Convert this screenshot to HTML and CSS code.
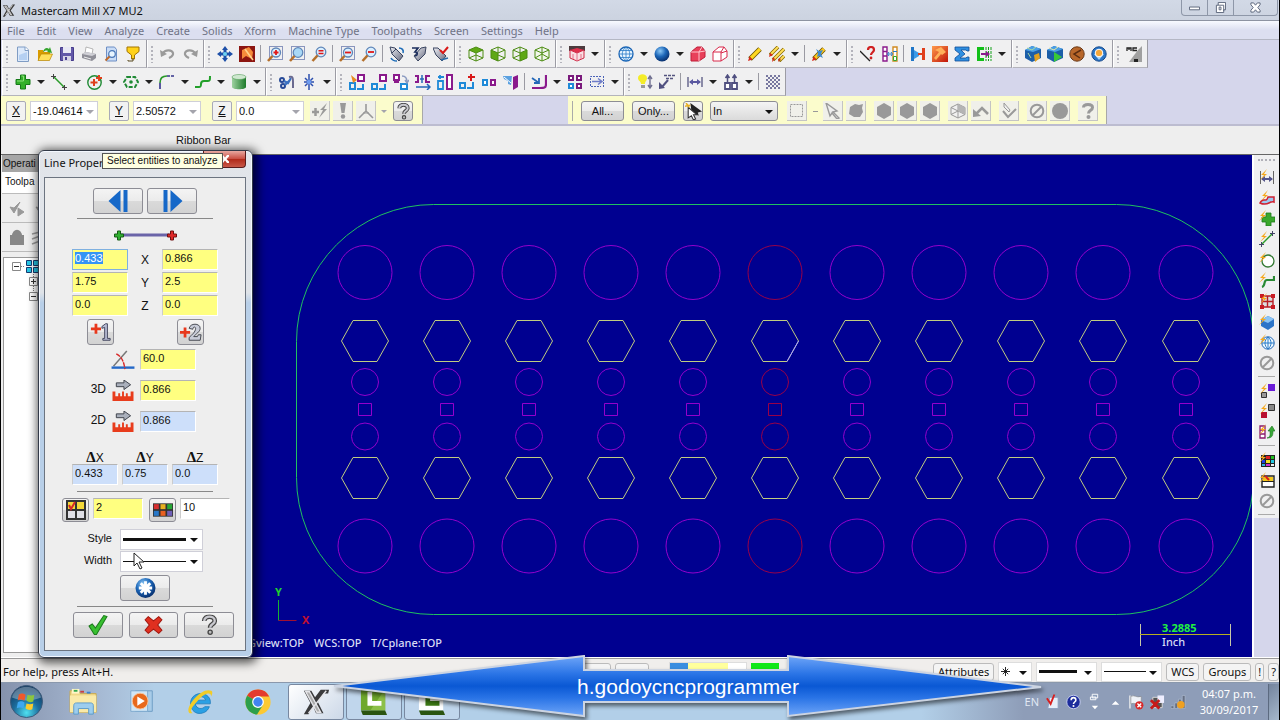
FILE: index.html
```
<!DOCTYPE html>
<html lang="en">
<head>
  <meta charset="UTF-8">
  <meta name="viewport" content="width=device-width, initial-scale=1.0">
  <title>Mastercam Mill X7 MU2</title>
  <link rel="stylesheet" href="styles.css">
</head>
<body>

  <!-- Icon set -->
  <svg class="icon-defs" aria-hidden="true">
    <defs>
      <linearGradient id="g-green" x1="0" y1="0" x2="1" y2="0"><stop offset="0" stop-color="#9ed2a0"/><stop offset="1" stop-color="#1d7a2a"/></linearGradient>
      <linearGradient id="g-red" x1="0" y1="0" x2="1" y2="1"><stop offset="0" stop-color="#ff9a4a"/><stop offset="1" stop-color="#c01408"/></linearGradient>
      <linearGradient id="g-steel" x1="0" y1="0" x2="1" y2="1"><stop offset="0" stop-color="#f2f3f8"/><stop offset="1" stop-color="#63677c"/></linearGradient>
      <linearGradient id="g-banner" x1="0" y1="0" x2="0" y2="1"><stop offset="0" stop-color="#6ea5f8"/><stop offset=".3" stop-color="#2a74e6"/><stop offset=".5" stop-color="#0a58d4"/><stop offset=".7" stop-color="#2a74e6"/><stop offset="1" stop-color="#6ea5f8"/></linearGradient>
      <radialGradient id="g-ball" cx=".38" cy=".3" r=".75"><stop offset="0" stop-color="#8cc8f6"/><stop offset=".5" stop-color="#1c66b8"/><stop offset="1" stop-color="#062a66"/></radialGradient>
      <radialGradient id="g-orb" cx=".5" cy=".85" r=".8"><stop offset="0" stop-color="#4fe0f0"/><stop offset=".5" stop-color="#1c6c9c"/><stop offset="1" stop-color="#123a60"/></radialGradient>
    </defs>

    <symbol id="mark" viewBox="0 0 16 16"><path d="M1 2h5l2 4 4-5h3L10 8l4 6H9L7 10l-4 5H1l4-7z" fill="#3c3c3c"/><path d="M3 3h2l6 10h-1zM12 2L4 13" stroke="#d8d8d8" fill="#999"/></symbol>
    <symbol id="new" viewBox="0 0 16 16"><path d="M2.500 1h8l3 3v11.500h-11z" fill="#dce9fa" stroke="#7f9cc4"/><path d="M10 1v3.500h3.500" fill="#fff" stroke="#7f9cc4"/><path d="M4 9l8-3v8H4z" fill="#b5d0f2"/></symbol>
    <symbol id="open" viewBox="0 0 16 16"><path d="M1 14V4h5l1 2h6v8z" fill="#d99b00"/><path d="M1 14.500L4 8h11.500l-3 6.500z" fill="#ffdf5a" stroke="#b88400" stroke-width=".7"/><path d="M6 6c1-4 4-5 6-3l1-2 2 6-5-1 1-1c-2-1-3 0-5 1z" fill="#35a52e"/></symbol>
    <symbol id="save" viewBox="0 0 16 16"><path d="M1.500 1.500h13v13h-13z" fill="#6258a8" stroke="#463c8c"/><path d="M4 1h8v6H4z" fill="#e8e8f4"/><path d="M4 10h8v5H4z" fill="#d6d4e6"/><path d="M6 11h2v3H6z" fill="#4a4090"/></symbol>
    <symbol id="print" viewBox="0 0 16 16"><path d="M5 1l7 2-1 5H4z" fill="#fff" stroke="#999" stroke-width=".7"/><path d="M1 8l4-2 10 2v4l-4 3-10-3z" fill="#8f8f98"/><path d="M1 8l4-2 10 2-4 2z" fill="#d0d0d6"/><path d="M3 11l7 2" stroke="#eee"/></symbol>
    <symbol id="preview" viewBox="0 0 16 16"><path d="M3.500 1h8l2 2.500V15h-10z" fill="#c9dcf6" stroke="#6d8ec4"/><circle cx="9" cy="8" r="3.300" fill="#e8f5ff" stroke="#4a78b8" stroke-width="1.200"/><path d="M6.500 10.500l-4 4" stroke="#c06a2a" stroke-width="2"/></symbol>
    <symbol id="funnel" viewBox="0 0 16 16"><path d="M2 1h12v4.500L9.500 9v4h-3V9L2 5.500z" fill="#ffd21a" stroke="#a37400"/><path d="M8 12v3H3v-1" stroke="#5a4a20" fill="none"/></symbol>
    <symbol id="undo" viewBox="0 0 16 16"><path d="M3 7c3-4 9-3 10 0 .6 3-2 4-4 5" fill="none" stroke="#9a9a9a" stroke-width="2.200"/><path d="M0 4l1 7 6-3z" fill="#9a9a9a"/></symbol>
    <symbol id="redo" viewBox="0 0 16 16"><path d="M13 7C10 3 4 4 3 7c-.6 3 2 4 4 5" fill="none" stroke="#9a9a9a" stroke-width="2.200"/><path d="M16 4l-1 7-6-3z" fill="#9a9a9a"/></symbol>
    <symbol id="pan" viewBox="0 0 16 16"><path d="M8 0l3 4H9.500v2.500H12V5l4 3-4 3V9.500H9.500V12H11l-3 4-3-4h1.500V9.500H4V11L0 8l4-3v1.500h2.500V4H5z" fill="#1d4fa8"/><circle cx="8" cy="8" r="2" fill="#6cd0f0"/></symbol>
    <symbol id="repaint" viewBox="0 0 16 16"><path d="M0 0h16v16H0z" fill="#8c1510"/><path d="M3 4l7-3 4 5-1 7-6-3-4 3z" fill="#f58b3a"/><path d="M6 3l5 7 3 4" stroke="#ffd28a" stroke-width="1.600"/></symbol>
    <symbol id="zoomwin" viewBox="0 0 16 16"><path d="M2.500.5h13v13h-13z" fill="none" stroke="#223a88" stroke-dasharray="1 1"/><circle cx="9" cy="6.500" r="4.500" fill="#d9efff" stroke="#5f86b8" stroke-width="1.300"/><path d="M5.500 10L1 15" stroke="#b5702c" stroke-width="2.600"/><path d="M9 4v5M6.500 6.500h5" stroke="#e01818" stroke-width="1.800"/></symbol>
    <symbol id="zoomfit" viewBox="0 0 16 16"><path d="M2.500.5h13v13h-13z" fill="none" stroke="#223a88" stroke-dasharray="1 1"/><circle cx="9" cy="6.500" r="4.800" fill="#a9d8f6" stroke="#5f86b8" stroke-width="1.300"/><path d="M5.500 10L1 15" stroke="#b5702c" stroke-width="2.600"/></symbol>
    <symbol id="zoomeq" viewBox="0 0 16 16"><circle cx="10" cy="6" r="4.800" fill="#d9efff" stroke="#5f86b8" stroke-width="1.300"/><path d="M6.500 9.500L1.500 15" stroke="#b5702c" stroke-width="2.600"/><path d="M7.500 4.800h5M7.500 7.500h5" stroke="#e01818" stroke-width="1.500"/></symbol>
    <symbol id="zoomoutwin" viewBox="0 0 16 16"><path d="M2.500.5h13v13h-13z" fill="none" stroke="#223a88" stroke-dasharray="1 1"/><circle cx="9" cy="6.500" r="4.500" fill="#d9efff" stroke="#5f86b8" stroke-width="1.300"/><path d="M5.500 10L1 15" stroke="#b5702c" stroke-width="2.600"/><path d="M6 6.500h6" stroke="#e01818" stroke-width="1.800"/></symbol>
    <symbol id="zoomout" viewBox="0 0 16 16"><circle cx="10" cy="6" r="4.800" fill="#d9efff" stroke="#5f86b8" stroke-width="1.300"/><path d="M6.500 9.500L1.500 15" stroke="#b5702c" stroke-width="2.600"/><path d="M7 6h6" stroke="#e01818" stroke-width="1.800"/></symbol>
    <symbol id="spin" viewBox="0 0 16 16"><path d="M1 1l5 1 8 8-4 5-7-7z" fill="url(#g-steel)" stroke="#3a4560"/><path d="M3 7l4-4" stroke="#3a4560"/><path d="M10 2c3 0 5 2 4 5M2 12c1 2 4 3 6 3" fill="none" stroke="#1f6db8" stroke-width="1.600"/></symbol>
    <symbol id="spin2" viewBox="0 0 16 16"><path d="M15 1l-5 1-7 8 4 5 7-7z" fill="url(#g-steel)" stroke="#3a4560"/><path d="M1 2h6L4 6c3 0 3 3 0 4" fill="none" stroke="#1b2d5c" stroke-width="1.700"/></symbol>
    <symbol id="spinok" viewBox="0 0 16 16"><path d="M0 2l5 0 8 8-4 5-6-6z" fill="url(#g-steel)" stroke="#3a4560"/><path d="M7 4l3 3 5-6" fill="none" stroke="#d81818" stroke-width="2"/><path d="M8 14l7-2" stroke="#2a6aa8" stroke-width="1.500"/></symbol>
    <symbol id="cubetop" viewBox="0 0 16 16"><path d="M1 4l7-3 7 3-7 3z" fill="#5fa816"/><path d="M1 4l7-3 7 3v8l-7 3-7-3zM1 4l7 3 7-3M8 7v8M1 12l7-3 7 3" fill="none" stroke="#4c8c12"/></symbol>
    <symbol id="cubefront" viewBox="0 0 16 16"><path d="M1 4l7 3v8l-7-3z" fill="#5fa816"/><path d="M1 4l7-3 7 3v8l-7 3-7-3zM1 4l7 3 7-3M8 1v14M8 9l7 3" fill="none" stroke="#4c8c12"/></symbol>
    <symbol id="cuberight" viewBox="0 0 16 16"><path d="M15 4L8 7v8l7-3z" fill="#5fa816"/><path d="M1 4l7-3 7 3v8l-7 3-7-3zM1 4l7 3 7-3M8 1v14M8 9l-7 3" fill="none" stroke="#4c8c12"/></symbol>
    <symbol id="cubeiso" viewBox="0 0 16 16"><path d="M1 4l7-3 7 3v8l-7 3-7-3zM1 4l7 3 7-3M8 1v14M1 12l7-4 7 4" fill="#f2f7ea" stroke="#4c8c12"/></symbol>
    <symbol id="cubered" viewBox="0 0 16 16"><path d="M0 0h16v5H0z" fill="#4b3b3e"/><path d="M1 4l7-2 7 2-7 3z" fill="#e0304c"/><path d="M1 4l7 3 7-3v8l-7 3-7-3z" fill="#f9dfe3" stroke="#cf2844"/><path d="M8 7v8M4 8v5M12 8v5" stroke="#e4708a"/></symbol>
    <symbol id="globe" viewBox="0 0 16 16"><circle cx="8" cy="8" r="7" fill="#eaf6ff" stroke="#1a63b4" stroke-width="1.300"/><path d="M1 8h14M8 1v14M2.500 4.500h11M2.500 11.500h11M8 1C3 5 3 11 8 15M8 1c5 4 5 10 0 14" fill="none" stroke="#2a7cc8" stroke-width=".8"/></symbol>
    <symbol id="ball" viewBox="0 0 16 16"><circle cx="8" cy="8" r="7.500" fill="url(#g-ball)"/></symbol>
    <symbol id="solidred" viewBox="0 0 16 16"><path d="M1 6l6-5h5l3 4v6l-6 4H1z" fill="#e8405a" stroke="#c01c38"/><path d="M1 6h8v9M9 6l3-5M9 6l6-1" fill="none" stroke="#ffc4cc"/></symbol>
    <symbol id="solidwire" viewBox="0 0 16 16"><path d="M1 6l6-5h5l3 4v6l-6 4H1zM1 6h8v9M9 6l3-5M9 7l6-2" fill="#fff" stroke="#d8284a"/></symbol>
    <symbol id="pencil" viewBox="0 0 16 16"><path d="M3 13L13 3" stroke="#6b5200" stroke-width="5"/><path d="M4 12l9-9" stroke="#ffd820" stroke-width="3.200"/><path d="M1 15l1.500-4.500 3 3z" fill="#d82a1a"/></symbol>
    <symbol id="pencils" viewBox="0 0 16 16"><path d="M1 9l8-8M4 14L15 3M10 15l5-5" stroke="#8a6a00" stroke-width="3.600"/><path d="M2 8l7-7M5 13L15 3M11 14l4-4" stroke="#ffdf58" stroke-width="2"/><path d="M0 11l4-2-3-2zM3 16l3-3-2-2zM9 16l3-3-2-1z" fill="#d82a1a"/></symbol>
    <symbol id="pencilblue" viewBox="0 0 16 16"><path d="M3 13L13 3" stroke="#6b5200" stroke-width="5"/><path d="M4 12l9-9" stroke="#ffc81a" stroke-width="3.200"/><path d="M1 15l1.500-4.500 3 3z" fill="#d82a1a"/><path d="M5 3l3 2 4-1-2 4 2 4-4-2-2 1 1-4z" fill="#3d8ad0"/></symbol>
    <symbol id="what" viewBox="0 0 16 16"><path d="M0 5l10 10" stroke="#222" stroke-width="1.300"/><path d="M8 4c0-4 6-4 6 0 0 2-3 2.500-3 5" fill="none" stroke="#d02020" stroke-width="2.200"/><circle cx="11" cy="12" r="1.400" fill="#d02020"/></symbol>
    <symbol id="compare" viewBox="0 0 16 16"><path d="M1 1h4v14H1zM1 5.500h4M1 10h4" fill="#fff" stroke="#8a1a8c" stroke-width="1.400"/><path d="M11 1h4v14h-4z" fill="#fff" stroke="#d08a20" stroke-width="1.400"/><path d="M11.500 10.500h3v4h-3z" fill="#fff" stroke="#35a52e"/><path d="M11 5.500h4" stroke="#2a7cc8"/><path d="M6 8h4M7 6L5.500 8 7 10M9 6l1.500 2L9 10" stroke="#2a7cc8" fill="none"/></symbol>
    <symbol id="dynamic" viewBox="0 0 16 16"><path d="M1 1h3v14H1z" fill="#1f76c8"/><path d="M4 4l5 3v3l-5 3z" fill="#3a9ae8"/><path d="M8 7h4V2h3v12h-3V9H8z" fill="#e0401c"/></symbol>
    <symbol id="hammer" viewBox="0 0 16 16"><path d="M0 0h16v16H0z" fill="url(#g-red)"/><path d="M3 4l6-3 5 5-4 3-1-1-5 6-2-2 5-6z" fill="#ffb05a"/></symbol>
    <symbol id="sigma" viewBox="0 0 16 16"><path d="M1 1h14v4h-2l-1-1H7l4 4-5 4h6l1-1h2v4H1v-3l5-4-5-4z" fill="#2f8fe0" stroke="#104c98" stroke-width=".8"/></symbol>
    <symbol id="contour" viewBox="0 0 16 16"><path d="M8 1H1v14h7v-3H4V4h4z" fill="#12c018"/><path d="M10 1v14M12.500 1v14M15 1v14" stroke="#12a018" stroke-dasharray="3 1"/><path d="M5 7h5V5l4 3-4 3V9H5z" fill="#8a1a8c"/></symbol>
    <symbol id="verify" viewBox="0 0 16 16"><path d="M0 4l7-4 9 3v9l-9 4-7-4z" fill="#1b5ea8"/><path d="M0 4l7-4 9 3-8 3z" fill="#4aa0e8"/><path d="M2 2l5 2 4-3M3 7l3 5" stroke="#a8d8a0" fill="none"/><path d="M9 9l5-2 1 5-5 4z" fill="#e0a020"/></symbol>
    <symbol id="backplot" viewBox="0 0 16 16"><path d="M0 4l7-4 9 3v9l-9 4-7-4z" fill="#1b5ea8"/><path d="M0 4l7-4 9 3-8 3z" fill="#4aa0e8"/><path d="M2 2l5 2 4-3" stroke="#e8e8a0" fill="none"/><path d="M7 6l8 5-8 5z" fill="#38c838"/></symbol>
    <symbol id="coin" viewBox="0 0 16 16"><circle cx="8" cy="8" r="7.200" fill="#b8672a" stroke="#6a3a18"/><path d="M12 4L5 8l6 4" fill="none" stroke="#5c2d10" stroke-width="1.500"/></symbol>
    <symbol id="coinblue" viewBox="0 0 16 16"><circle cx="8" cy="8" r="7.200" fill="#2a76c8" stroke="#164a8c"/><path d="M3 8l5 6 5-6z" fill="#a8d4f8"/><circle cx="8" cy="7" r="3.800" fill="#f6a83a" stroke="#fff"/></symbol>
    <symbol id="mc" viewBox="0 0 16 16"><path d="M16 0v16H3L12 4z" fill="#a0a0a0"/><path d="M1 5V2h4v3M3 2v2M11 2H7v2.500h4" fill="none" stroke="#222" stroke-width="1.300"/><path d="M8 13h4v3H8z" fill="#222"/></symbol>

    <symbol id="plus" viewBox="0 0 16 16"><path d="M5.500 1h5v4.500H15v5h-4.500V15h-5v-4.500H1v-5h4.500z" fill="#34b02a" stroke="#157a18"/><path d="M6.500 2h2v5H2" fill="none" stroke="#8ae07a"/></symbol>
    <symbol id="line" viewBox="0 0 16 16"><path d="M3 3l10 10" stroke="#2a9a2a" stroke-width="1.500"/><path d="M0 2.500h5M2.500 0v5M11 13.500h5M13.500 11v5" stroke="#444"/></symbol>
    <symbol id="arc" viewBox="0 0 16 16"><circle cx="7.500" cy="8.500" r="6.700" fill="none" stroke="#1f8a34" stroke-width="1.400"/><path d="M7 5v7M3.500 8.500h7M12 1v6M9 4h6" stroke="#e0401c" stroke-width="2"/></symbol>
    <symbol id="slot" viewBox="0 0 16 16"><path d="M4 3h8l3 5-3 5H4L1 8z" fill="none" stroke="#1f8a34" stroke-width="2" stroke-dasharray="4 1.500"/><circle cx="8" cy="8" r="1.800" fill="#1f8a34"/></symbol>
    <symbol id="fillet" viewBox="0 0 16 16"><path d="M1 15V9" stroke="#34348c" stroke-width="1.600"/><path d="M1 9c0-5 2-7 7-7" fill="none" stroke="#2a9a2a" stroke-width="1.600"/><path d="M8 2h8" stroke="#34348c" stroke-width="1.600" stroke-dasharray="3 1"/></symbol>
    <symbol id="spline" viewBox="0 0 16 16"><path d="M0 13h4c2 0 2-1 2-3s1-3 3-3h4c2 0 2-1 2-5" fill="none" stroke="#22a02a" stroke-width="2"/></symbol>
    <symbol id="cylinder" viewBox="0 0 16 16"><path d="M1 3v10c0 3 14 3 14 0V3z" fill="url(#g-green)"/><ellipse cx="8" cy="3" rx="7" ry="2.500" fill="#cfe8d0" stroke="#5aa060" stroke-width=".6"/></symbol>
    <symbol id="wrench" viewBox="0 0 16 16"><circle cx="3" cy="6" r="2" fill="none" stroke="#274a98" stroke-width="2"/><circle cx="4" cy="12" r="2" fill="none" stroke="#274a98" stroke-width="2"/><path d="M5 7l4 2 3-5M6 11l5-5" fill="none" stroke="#3a70c0" stroke-width="2.200"/><path d="M10 3c4-1 4 1 4 5v6" fill="none" stroke="#6a6a90" stroke-width="2"/></symbol>
    <symbol id="star" viewBox="0 0 16 16"><path d="M8 0v16M4 4l8 8M12 4l-8 8M3 8h10" stroke="#2c4fae" stroke-width="1.500"/><circle cx="8" cy="8" r="2.200" fill="#6d9cf0"/></symbol>
    <symbol id="x1" viewBox="0 0 16 16"><path d="M9 1h6v6H9z" fill="#fff" stroke="#8a1a8c" stroke-width="2"/><path d="M1 9h5v6H1zM8 15h6v-5" fill="none" stroke="#1f8ad8" stroke-width="2"/><path d="M2 1l6 5-4 3z" fill="#e88a20"/></symbol>
    <symbol id="x2" viewBox="0 0 16 16"><path d="M9 1h6v6H9z" fill="#fff" stroke="#8a1a8c" stroke-width="2"/><path d="M1 10h5v5H1zM8 15h6v-5" fill="none" stroke="#1f8ad8" stroke-width="2"/></symbol>
    <symbol id="x3" viewBox="0 0 16 16"><path d="M1 1h5v5H1zM1 8h5" fill="#fff" stroke="#8a1a8c" stroke-width="2"/><path d="M8 10h6v5H8z" fill="#fff" stroke="#1f8ad8" stroke-width="2"/><path d="M9 2c4 0 5 2 5 6M12 6l2 3 2-3" fill="none" stroke="#8a9ac0" stroke-width="1.400"/></symbol>
    <symbol id="x4" viewBox="0 0 16 16"><path d="M15 2h-4v6h4M0 2h3v6H0" fill="none" stroke="#8a1a8c" stroke-width="2"/><path d="M7 1v8M1 13h14M12 10l3 3-3 3M5 5h4" fill="none" stroke="#2468b8" stroke-width="1.500"/></symbol>
    <symbol id="x5" viewBox="0 0 16 16"><path d="M10 1h5v14h-5z" fill="#fff" stroke="#8a1a8c" stroke-width="2"/><path d="M1 7h5v8H1zM1 3h6M3 1v4" fill="none" stroke="#1f8ad8" stroke-width="1.800"/></symbol>
    <symbol id="x6" viewBox="0 0 16 16"><path d="M1 9h5v5H1zM8 14h6V8" fill="none" stroke="#1f8ad8" stroke-width="2"/><path d="M12 0v7M9 3h7" stroke="#d81818" stroke-width="2"/></symbol>
    <symbol id="x7" viewBox="0 0 16 16"><path d="M2 6h4v5H2z" fill="#fff" stroke="#1f8ad8" stroke-width="2"/><path d="M10 6h4v5h-4z" fill="#fff" stroke="#8a1a8c" stroke-width="2"/></symbol>
    <symbol id="x8" viewBox="0 0 16 16"><path d="M10 3l5-2v12l-5 3z" fill="#8a1a8c"/><path d="M0 2h9l-1 9-3-1V7L1 5z" fill="#5aa0e0"/><path d="M1 3l7 6" stroke="#fff"/></symbol>
    <symbol id="x9" viewBox="0 0 16 16"><path d="M1 4l7 5M8 4v5H3" fill="none" stroke="#2468b8" stroke-width="1.800"/><path d="M15 1v9c0 4-2 4-6 4H1" fill="none" stroke="#8a1a8c" stroke-width="2.200"/></symbol>
    <symbol id="x10" viewBox="0 0 16 16"><path d="M2 2h4v4H2zM10 2h4v4h-4zM10 10h4v4h-4z" fill="#fff" stroke="#7a1a7c" stroke-width="2"/><path d="M2 10h4v4H2z" fill="#fff" stroke="#1f8ad8" stroke-width="2"/></symbol>
    <symbol id="x11" viewBox="0 0 16 16"><path d="M12 2.500H1.500v10H12M14.500 2v11" fill="none" stroke="#4a62b8" stroke-dasharray="2 1"/><path d="M3 7.500h9M9 4.500l4 3-4 3" fill="none" stroke="#6e7cc8" stroke-width="1.500"/></symbol>
    <symbol id="bulb" viewBox="0 0 16 16"><path d="M1 4c0-5 9-5 9 0 0 3-2 3-2 6H4c0-3-3-3-3-6z" fill="#f4ec28"/><path d="M4 11h4v3H4z" fill="#999"/><path d="M13 2v12M11 5l2-3 2 3M11 11l2 3 2-3" fill="none" stroke="#707090" stroke-width="1.400"/></symbol>
    <symbol id="note" viewBox="0 0 16 16"><path d="M5 1.500h11M7 4.500h8" stroke="#555580" stroke-dasharray="3 1" stroke-width="1.300"/><path d="M9 6l-6 7" stroke="#505080" stroke-width="2"/><path d="M0 15V8l6 6z" fill="#505080"/></symbol>
    <symbol id="dim" viewBox="0 0 16 16"><path d="M1 3v10M15 3v10" stroke="#555580" stroke-width="1.300"/><path d="M3 8h10" stroke="#5a58a0" stroke-width="2"/><path d="M2 8l4-3v6zM14 8l-4-3v6z" fill="#5a58a0"/></symbol>
    <symbol id="dims" viewBox="0 0 16 16"><path d="M2 9h5v6H2zM9 9h5v6H9z" fill="#fff" stroke="#505080" stroke-width="1.800"/><path d="M4.500 8V2M11.500 8V2M2.500 4l2-3 2 3M9.500 4l2-3 2 3" fill="none" stroke="#505080" stroke-width="1.500"/></symbol>
    <symbol id="hatch" viewBox="0 0 16 16"><path d="M1 2h14M1 6h14M1 10h14M1 14h14" stroke="#7878a0" stroke-width="2" stroke-dasharray="2 2"/><path d="M3 4h12M3 8h12M3 12h12" stroke="#7878a0" stroke-width="2" stroke-dasharray="2 2"/></symbol>

    <symbol id="flash" viewBox="0 0 16 16"><path d="M0 9h7M3.500 5v8" stroke="#999" stroke-width="2.500"/><path d="M15 0L8 7h3l-4 8 8-9h-3z" fill="#999"/></symbol>
    <symbol id="bang" viewBox="0 0 16 16"><path d="M5 0h6L9.500 10h-3z" fill="#999"/><circle cx="8" cy="13.500" r="2.200" fill="#999"/></symbol>
    <symbol id="axis" viewBox="0 0 16 16"><path d="M8 1v7L1 15M8 8l7 7" fill="none" stroke="#999" stroke-width="1.600"/><path d="M5 10l6 0" stroke="#999"/></symbol>
    <symbol id="help" viewBox="0 0 16 16"><path d="M4 5c0-4.500 8-4.500 8 0C12 7.500 8.500 7 8.500 10" fill="none" stroke="#444" stroke-width="3.600"/><path d="M4 5c0-4.500 8-4.500 8 0C12 7.500 8.500 7 8.500 10" fill="none" stroke="#c9c9cf" stroke-width="1.800"/><circle cx="8.500" cy="13.500" r="1.600" fill="#bbb" stroke="#444"/></symbol>
    <symbol id="helpoff" viewBox="0 0 16 16"><path d="M3.500 4.500c0-4 9-4 9 0C12.500 7.500 8.500 7 8.500 10.500" fill="none" stroke="#999" stroke-width="3"/><circle cx="8.500" cy="14" r="2" fill="#999"/></symbol>
    <symbol id="pick" viewBox="0 0 16 16"><path d="M5 0l11 8-4 1 1 3-3-2-4-3z" fill="#222"/><path d="M3 4v10l3-2 2 4 2-1-2-4h3z" fill="#fff" stroke="#333"/><path d="M0 3l5-1M1 0l3 4" stroke="#e8b020" stroke-width="1.400"/></symbol>
    <symbol id="marquee" viewBox="0 0 16 16"><path d="M1.500 1.500h12v12h-12z" fill="none" stroke="#999" stroke-dasharray="2 1"/></symbol>
    <symbol id="arrow" viewBox="0 0 16 16"><path d="M1 0l11 8-4 1 6 6-2 1-5-6-2 3z" fill="#eee" stroke="#999" stroke-width="1.400"/></symbol>
    <symbol id="blob" viewBox="0 0 16 16"><path d="M2 4l5-3 4 1 4-1-1 4 1 4-3 5H6l-5-3z" fill="#999"/></symbol>
    <symbol id="hexa" viewBox="0 0 16 16"><path d="M8 0l7 4v8l-7 4-7-4V4z" fill="#999"/></symbol>
    <symbol id="pie" viewBox="0 0 16 16"><path d="M8 1l7 3.500v7L8 15l-7-3.500v-7z" fill="#f0f0f0" stroke="#999"/><path d="M8 1v14M1 4.500l7 3.500 7-3.500M1 11.500L8 8l7 3.500" fill="none" stroke="#999"/><path d="M8 1l7 3.500v7L8 8z" fill="#b4b4b4"/></symbol>
    <symbol id="bend" viewBox="0 0 16 16"><path d="M3 11l6-6 6 6" fill="none" stroke="#999" stroke-width="2.600"/><path d="M0 6v8l8-1z" fill="#999"/></symbol>
    <symbol id="checkpen" viewBox="0 0 16 16"><path d="M2 8l5 6 8-8" fill="none" stroke="#999" stroke-width="2"/><path d="M3 0l6 7-1 2L3 4z" fill="#eee" stroke="#999"/></symbol>
    <symbol id="none" viewBox="0 0 16 16"><circle cx="8" cy="8" r="6.300" fill="none" stroke="#999" stroke-width="2"/><path d="M12.500 3.500l-9 9" stroke="#999" stroke-width="2"/></symbol>
    <symbol id="disc" viewBox="0 0 16 16"><circle cx="8" cy="8" r="8" fill="#999"/></symbol>

    <symbol id="q1" viewBox="0 0 16 16"><path d="M1.500 2v13M14.500 2v13" stroke="#666"/><path d="M3 10h10" stroke="#55558c" stroke-width="2"/><path d="M2 10l4-3v6zM14 10l-4-3v6z" fill="#55558c"/><path d="M8 0L2 6h3L1 11l7-6H5z" fill="#f5a81c"/></symbol>
    <symbol id="q2" viewBox="0 0 16 16"><path d="M1 13c3-7 6 1 8-6l6 0v5c-4-2-6 5-14 1z" fill="#9cc8f0" stroke="#d02030" stroke-width="1.500"/><path d="M9 0L3 6h3L2 11l7-6H6z" fill="#f5a81c"/></symbol>
    <symbol id="q3" viewBox="0 0 16 16"><path d="M7 3h5v4h4v5h-4v4H7v-4H3V7h4z" fill="#3aa82c" stroke="#1c7a1c" stroke-width=".8"/><path d="M7 0L1 6h3L0 11l7-6H4z" fill="#f5a81c"/></symbol>
    <symbol id="q4" viewBox="0 0 16 16"><path d="M3 13L13 3" stroke="#2a9a2a" stroke-width="1.500"/><path d="M0 13.500h5M2.500 11v5M11 2.500h5M13.500 0v5" stroke="#446"/><path d="M8 0L2 6h3L1 11l7-6H5z" fill="#f5a81c"/></symbol>
    <symbol id="q5" viewBox="0 0 16 16"><circle cx="9" cy="9" r="6" fill="#fff" stroke="#347a34" stroke-width="1.300"/><path d="M7 0L1 6h3L0 11l7-6H4z" fill="#f5a81c"/></symbol>
    <symbol id="q6" viewBox="0 0 16 16"><path d="M3 15c4-1 1-7 5-7h7V4" fill="none" stroke="#2a8a34" stroke-width="2.200"/><path d="M7 0L1 6h3L0 11l7-6H4z" fill="#f5a81c"/></symbol>
    <symbol id="q7" viewBox="0 0 16 16"><path d="M3 3h11v11H3zM3 8.500h11M8.500 3v11" fill="#ddd" stroke="#b81c24" stroke-width="1.400"/><path d="M1 1h4v4H1zM12 1h4v4h-4zM1 12h4v4H1zM12 12h4v4h-4z" fill="#c81c24"/><path d="M8 0L2 6h3L1 11l7-6H5z" fill="#f5a81c"/></symbol>
    <symbol id="q8" viewBox="0 0 16 16"><path d="M2 6l7-4 6 3v7l-6 4-7-4z" fill="#2c74c8"/><path d="M2 6l7-4 6 3-6 4z" fill="#8cc4f4"/><path d="M7 0L1 6h3L0 11l7-6H4z" fill="#f5a81c"/></symbol>
    <symbol id="q9" viewBox="0 0 16 16"><circle cx="9" cy="9" r="6.200" fill="#eef8ff" stroke="#1a63b4"/><path d="M3 9h12M9 3v12M9 3C5 6 5 12 9 15M9 3c4 3 4 9 0 12" fill="none" stroke="#2a7cc8"/><path d="M7 0L1 6h3L0 11l7-6H4z" fill="#f5a81c"/></symbol>
    <symbol id="q10" viewBox="0 0 16 16"><path d="M9 1h7v7H9z" fill="#6a1cd8"/><path d="M2.500 9.500h5v5h-5z" fill="#999" stroke="#333"/><path d="M8 0L2 6h3L1 11l7-6H5z" fill="#f5a81c"/></symbol>
    <symbol id="q11" viewBox="0 0 16 16"><path d="M9.500 1.500h6v6h-6z" fill="#888" stroke="#333"/><path d="M2 9h6v6H2z" fill="#b81030"/><path d="M8 0L2 6h3L1 11l7-6H5z" fill="#f5a81c"/></symbol>
    <symbol id="q12" viewBox="0 0 16 16"><path d="M1 2h5v12H1zM1 6h5M1 10h5" fill="#fff" stroke="#8a1a6c" stroke-width="1.300"/><path d="M8 14c4-1 3-4 3-7H9l4-5 3 5h-2c0 5-1 7-6 7z" fill="#38a838" stroke="#1a701c" stroke-width=".6"/><path d="M7 0L1 6h3L0 11l7-6H4z" fill="#f5a81c"/></symbol>
    <symbol id="q13" viewBox="0 0 16 16"><path d="M2 3h14v12H2z" fill="#222"/><path d="M7 4h4v3H7z" fill="#e02020"/><path d="M12 4h3v3h-3z" fill="#22c022"/><path d="M3 8h3v3H3z" fill="#2040e0"/><path d="M7 8h4v3H7z" fill="#f0e020"/><path d="M12 8h3v3h-3z" fill="#20c8e0"/><path d="M3 12h3v2H3z" fill="#30b0e0"/><path d="M7 12h4v2H7z" fill="#d030d0"/><path d="M12 12h3v2h-3z" fill="#eee"/><path d="M7 0L1 6h3L0 11l7-6H4z" fill="#f5a81c"/></symbol>
    <symbol id="q14" viewBox="0 0 16 16"><path d="M3 4h12v11H3z" fill="#fff" stroke="#222" stroke-width="1.400"/><path d="M4 5h10v4H4z" fill="#f2c81c"/><path d="M3 9.500h12" stroke="#222"/><path d="M6 4l4 4" stroke="#d81c1c" stroke-width="2"/><path d="M7 0L1 6h3L0 11l7-6H4z" fill="#f5a81c"/></symbol>
  </svg>

  <div class="app">

    <header class="titlebar">
      <svg class="titlebar-mark"><use href="#mark"/></svg>
      <span class="titlebar-text">Mastercam Mill X7 MU2</span>
      <div class="window-buttons">
        <button aria-label="Minimize"><svg viewBox="0 0 12 12"><path d="M.5 5.500h11v3H.5z" fill="#fff" stroke="#566076"/></svg></button>
        <button aria-label="Restore"><svg viewBox="0 0 12 12"><path d="M3.500.5h8v8h-2v3h-8v-8h2z" fill="#fff" stroke="#566076"/><path d="M4.500 5.500h2v3h-2zM3.500 3.500h6v6" fill="none" stroke="#566076"/></svg></button>
        <button class="wide" aria-label="Close"><svg viewBox="0 0 12 12"><path d="M1 1h3l2 2.500L8 1h3v2L8.500 6 11 9v2H8L6 8.500 4 11H1V9l2.500-3L1 3z" fill="#fff" stroke="#566076"/></svg></button>
      </div>
    </header>

    <nav class="menubar">
      <a href="#">File</a>
      <a href="#">Edit</a>
      <a href="#">View</a>
      <a href="#">Analyze</a>
      <a href="#">Create</a>
      <a href="#">Solids</a>
      <a href="#">Xform</a>
      <a href="#">Machine Type</a>
      <a href="#">Toolpaths</a>
      <a href="#">Screen</a>
      <a href="#">Settings</a>
      <a href="#">Help</a>
    </nav>

    <div class="toolbar toolbar-main">
      <div class="group">
        <button class="tool" aria-label="New"><svg><use href="#new"/></svg></button>
        <button class="tool" aria-label="Open"><svg><use href="#open"/></svg></button>
        <button class="tool" aria-label="Save"><svg><use href="#save"/></svg></button>
        <button class="tool" aria-label="Print"><svg><use href="#print"/></svg></button>
        <button class="tool" aria-label="Print preview"><svg><use href="#preview"/></svg></button>
        <button class="tool" aria-label="Filter"><svg><use href="#funnel"/></svg></button>
      </div>
      <div class="group">
        <button class="tool" aria-label="Undo"><svg><use href="#undo"/></svg></button>
        <button class="tool" aria-label="Redo"><svg><use href="#redo"/></svg></button>
      </div>
      <div class="group">
        <button class="tool" aria-label="Pan"><svg><use href="#pan"/></svg></button>
        <button class="tool" aria-label="Repaint"><svg><use href="#repaint"/></svg></button>
        <span class="sep"></span>
        <button class="tool" aria-label="Zoom window"><svg><use href="#zoomwin"/></svg></button>
        <button class="tool" aria-label="Zoom target"><svg><use href="#zoomfit"/></svg></button>
        <button class="tool" aria-label="Fit"><svg><use href="#zoomeq"/></svg></button>
        <span class="sep"></span>
        <button class="tool" aria-label="Unzoom window"><svg><use href="#zoomoutwin"/></svg></button>
        <button class="tool" aria-label="Unzoom"><svg><use href="#zoomout"/></svg></button>
        <span class="sep"></span>
        <button class="tool" aria-label="Dynamic rotation"><svg><use href="#spin"/></svg></button>
        <button class="tool" aria-label="Previous view"><svg><use href="#spin2"/></svg></button>
        <button class="tool" aria-label="Named views"><svg><use href="#spinok"/></svg></button>
      </div>
      <div class="group">
        <button class="tool" aria-label="Top view"><svg><use href="#cubetop"/></svg></button>
        <button class="tool" aria-label="Front view"><svg><use href="#cubefront"/></svg></button>
        <button class="tool" aria-label="Right view"><svg><use href="#cuberight"/></svg></button>
        <button class="tool" aria-label="Isometric view"><svg><use href="#cubeiso"/></svg></button>
      </div>
      <div class="group">
        <button class="tool" aria-label="Planes"><svg><use href="#cubered"/></svg></button>
        <button class="drop" aria-label="More planes"></button>
      </div>
      <div class="group">
        <button class="tool" aria-label="Wireframe"><svg><use href="#globe"/></svg></button>
        <button class="drop" aria-label="Wireframe options"></button>
        <button class="tool" aria-label="Shaded"><svg><use href="#ball"/></svg></button>
        <button class="drop" aria-label="Shading options"></button>
        <button class="tool" aria-label="Solid shading"><svg><use href="#solidred"/></svg></button>
        <button class="tool" aria-label="Solid outline"><svg><use href="#solidwire"/></svg></button>
      </div>
      <div class="group">
        <button class="tool" aria-label="Delete"><svg><use href="#pencil"/></svg></button>
        <button class="tool" aria-label="Delete duplicates"><svg><use href="#pencils"/></svg></button>
        <button class="drop" aria-label="Delete options"></button>
        <span class="sep"></span>
        <button class="tool" aria-label="Undelete"><svg><use href="#pencilblue"/></svg></button>
        <button class="drop" aria-label="Undelete options"></button>
      </div>
      <div class="group">
        <button class="tool" aria-label="Analyze entity"><svg><use href="#what"/></svg></button>
        <button class="tool" aria-label="Compare"><svg><use href="#compare"/></svg></button>
        <span class="sep"></span>
        <button class="tool" aria-label="Analyze distance"><svg><use href="#dynamic"/></svg></button>
        <button class="tool" aria-label="Analyze dynamic"><svg><use href="#hammer"/></svg></button>
        <button class="tool" aria-label="Statistics"><svg><use href="#sigma"/></svg></button>
        <button class="tool" aria-label="Analyze contour"><svg><use href="#contour"/></svg></button>
        <button class="drop" aria-label="Analyze options"></button>
      </div>
      <div class="group">
        <button class="tool" aria-label="Verify"><svg><use href="#verify"/></svg></button>
        <button class="tool" aria-label="Backplot"><svg><use href="#backplot"/></svg></button>
        <button class="tool" aria-label="Lathe"><svg><use href="#coin"/></svg></button>
        <button class="tool" aria-label="Mill"><svg><use href="#coinblue"/></svg></button>
      </div>
      <div class="group">
        <button class="tool" aria-label="Run add-in"><svg><use href="#mc"/></svg></button>
      </div>
    </div>

    <div class="toolbar">
      <div class="group">
        <button class="tool" aria-label="Point"><svg><use href="#plus"/></svg></button>
        <button class="drop" aria-label="Point options"></button>
        <button class="tool" aria-label="Line"><svg><use href="#line"/></svg></button>
        <button class="drop" aria-label="Line options"></button>
        <button class="tool" aria-label="Arc"><svg><use href="#arc"/></svg></button>
        <button class="drop" aria-label="Arc options"></button>
        <button class="tool" aria-label="Shape"><svg><use href="#slot"/></svg></button>
        <button class="drop" aria-label="Shape options"></button>
        <button class="tool" aria-label="Fillet"><svg><use href="#fillet"/></svg></button>
        <button class="drop" aria-label="Fillet options"></button>
        <button class="tool" aria-label="Spline"><svg><use href="#spline"/></svg></button>
        <button class="drop" aria-label="Spline options"></button>
        <button class="tool" aria-label="Primitive"><svg><use href="#cylinder"/></svg></button>
        <button class="drop" aria-label="Primitive options"></button>
      </div>
      <div class="group">
        <button class="tool" aria-label="Trim"><svg><use href="#wrench"/></svg></button>
        <button class="tool" aria-label="Break"><svg><use href="#star"/></svg></button>
        <button class="drop" aria-label="Break options"></button>
      </div>
      <div class="group">
        <button class="tool" aria-label="Dynamic xform"><svg><use href="#x1"/></svg></button>
        <button class="tool" aria-label="Translate"><svg><use href="#x2"/></svg></button>
        <button class="tool" aria-label="Rotate"><svg><use href="#x3"/></svg></button>
        <button class="tool" aria-label="Mirror"><svg><use href="#x4"/></svg></button>
        <button class="tool" aria-label="Scale"><svg><use href="#x5"/></svg></button>
        <button class="tool" aria-label="Move to origin"><svg><use href="#x6"/></svg></button>
        <button class="tool" aria-label="Offset"><svg><use href="#x7"/></svg></button>
        <button class="tool" aria-label="Project"><svg><use href="#x8"/></svg></button>
        <span class="sep"></span>
        <button class="tool" aria-label="Offset contour"><svg><use href="#x9"/></svg></button>
        <button class="drop" aria-label="Offset options"></button>
        <button class="tool" aria-label="Rectangular array"><svg><use href="#x10"/></svg></button>
        <button class="tool" aria-label="Stretch"><svg><use href="#x11"/></svg></button>
        <button class="drop" aria-label="Stretch options"></button>
      </div>
      <div class="group">
        <button class="tool" aria-label="Smart dimension"><svg><use href="#bulb"/></svg></button>
        <button class="tool" aria-label="Note"><svg><use href="#note"/></svg></button>
        <span class="sep"></span>
        <button class="tool" aria-label="Dimension"><svg><use href="#dim"/></svg></button>
        <button class="drop" aria-label="Dimension options"></button>
        <button class="tool" aria-label="Ordinate"><svg><use href="#dims"/></svg></button>
        <button class="drop" aria-label="Ordinate options"></button>
        <span class="sep"></span>
        <button class="tool" aria-label="Cross hatch"><svg><use href="#hatch"/></svg></button>
      </div>
    </div>

    <div class="toolbar toolbar-coords">
      <div class="strip strip-xyz">
        <label class="axis-button" for="pos-x"><u>X</u></label>
        <span class="combo"><input id="pos-x" value="-19.04614"></span>
        <label class="axis-button" for="pos-y"><u>Y</u></label>
        <span class="combo"><input id="pos-y" value="2.50572"></span>
        <label class="axis-button" for="pos-z"><u>Z</u></label>
        <span class="combo combo-last"><input id="pos-z" value="0.0"></span>
        <button class="tile" aria-label="Fast point"><svg><use href="#flash"/></svg></button>
        <button class="tile" aria-label="Config"><svg><use href="#bang"/></svg></button>
        <button class="tile" aria-label="Auto cursor"><svg><use href="#axis"/></svg></button>
        <button class="drop drop-off" aria-label="Auto cursor options"></button>
        <button class="push push-icon" aria-label="Help"><svg><use href="#help"/></svg></button>
      </div>
      <div class="strip strip-select">
        <span class="bar"></span>
        <button class="push push-text">All...</button>
        <button class="push push-text">Only...</button>
        <button class="push push-icon" aria-label="Standard selection"><svg><use href="#pick"/></svg></button>
        <span class="combo combo-in"><select aria-label="Window mode"><option>In</option><option>Out</option></select></span>
        <button class="tile" aria-label="Window"><svg><use href="#marquee"/></svg></button>
        <button class="drop-dash" aria-label="Window options"></button>
        <button class="tile" aria-label="Select"><svg><use href="#arrow"/></svg></button>
        <button class="tile" aria-label="Solid"><svg><use href="#blob"/></svg></button>
        <button class="tile gap" aria-label="Body"><svg><use href="#hexa"/></svg></button>
        <button class="tile" aria-label="Face"><svg><use href="#hexa"/></svg></button>
        <button class="tile" aria-label="Edge"><svg><use href="#hexa"/></svg></button>
        <button class="tile gap" aria-label="From back"><svg><use href="#pie"/></svg></button>
        <button class="tile" aria-label="Last"><svg><use href="#bend"/></svg></button>
        <button class="tile gap" aria-label="Verify selection"><svg><use href="#checkpen"/></svg></button>
        <button class="tile gap" aria-label="Unselect all"><svg><use href="#none"/></svg></button>
        <button class="tile" aria-label="End selection"><svg><use href="#disc"/></svg></button>
        <button class="tile gap" aria-label="Selection help"><svg><use href="#helpoff"/></svg></button>
      </div>
    </div>

    <div class="ribbon">Ribbon Bar</div>

    <main class="workspace">
      <aside class="operations">
        <h2>Operati</h2>
        <div class="tab">Toolpa</div>
        <div class="operations-tools">
          <svg viewBox="0 0 48 18"><path d="M2 8l4 6 6-11-6 6zM10 9l6 4-6 4zM28 8l4 6 6-11-6 6z" fill="#999" stroke="#999"/></svg>
        </div>
        <div class="operations-tools">
          <svg viewBox="0 0 48 18"><path d="M3 8h12v8H3zM5 8c0-7 8-7 8 0" fill="#888" stroke="#888" stroke-width="2"/><path d="M24 6l8-2M24 11l8-3M24 16l8-3" stroke="#999" stroke-width="1.500"/></svg>
        </div>
        <div class="tree">
          <svg viewBox="0 0 60 50"><path d="M13 8.500h8M29.500 14v24" stroke="#777" stroke-dasharray="1 1"/><path d="M8.500 4.500h8v8h-8zM25.500 19.500h8v8h-8zM25.500 34.500h8v8h-8z" fill="#fff" stroke="#888"/><path d="M10 8.500h5M27 23.500h5M29.500 21v5M27 38.500h5" stroke="#333"/><path d="M22.500 2.500h5v5h-5zM29.500 2.500h5v5h-5zM22.500 9.500h5v5h-5zM29.500 9.500h5v5h-5z" fill="#25c8e8" stroke="#163a70"/></svg>
        </div>
      </aside>

      <div class="viewport">
        <svg viewBox="240 155 1012 502" preserveAspectRatio="xMaxYMid slice">
          <defs>
            <g id="column" fill="none">
              <g class="hole">
                <circle cx="0" cy="272.500" r="27"/>
                <circle cx="0" cy="382" r="13.500"/>
                <path d="M-6.500 403.500h13v12h-13z"/>
                <circle cx="0" cy="436.500" r="13.500"/>
                <circle cx="0" cy="546" r="27"/>
              </g>
              <path class="hex" d="M-23.500 341l11.500-20.500h24l11.500 20.500-11.500 20.500h-24zM-23.500 478l11.500-20.500h24l11.500 20.500-11.500 20.500h-24z"/>
            </g>
          </defs>
          <rect class="outline" x="296.500" y="204.500" width="957" height="410" rx="137"/>
          <g class="violet">
            <use href="#column" x="365"/>
            <use href="#column" x="447"/>
            <use href="#column" x="529"/>
            <use href="#column" x="611"/>
            <use href="#column" x="693"/>
            <use href="#column" x="857"/>
            <use href="#column" x="939"/>
            <use href="#column" x="1021"/>
            <use href="#column" x="1103"/>
            <use href="#column" x="1186"/>
          </g>
          <g class="crimson"><use href="#column" x="775"/></g>
          <path d="M798.500 341l-11.500 20.500" stroke="#a8a0ff" fill="none"/>
          <!-- view axes -->
          <path d="M278.500 600v20.500" stroke="#18b030"/>
          <path d="M278.500 620.500h18" stroke="#a01030"/>
          <text class="axis-y" x="275" y="596">Y</text>
          <text class="axis-x" x="302" y="624">X</text>
          <text class="view-text" x="248" y="647">Gview:TOP</text>
          <text class="view-text" x="314" y="647">WCS:TOP</text>
          <text class="view-text" x="371" y="647">T/Cplane:TOP</text>
          <!-- scale bar -->
          <path d="M1140.500 624v22M1230.500 624v22" stroke="#c8c8a8"/>
          <path d="M1140 634.500h90" stroke="#b8b020"/>
          <text class="scale-value" x="1162" y="632">3.2885</text>
          <text class="scale-unit" x="1162" y="646">Inch</text>
        </svg>
      </div>

      <div class="quickmask">
        <span class="grip-top"></span>
        <button aria-label="Mask drafting"><svg><use href="#q1"/></svg></button>
        <button aria-label="Mask surfaces"><svg><use href="#q2"/></svg></button>
        <button aria-label="Mask points"><svg><use href="#q3"/></svg></button>
        <button aria-label="Mask lines"><svg><use href="#q4"/></svg></button>
        <button aria-label="Mask arcs"><svg><use href="#q5"/></svg></button>
        <button aria-label="Mask splines"><svg><use href="#q6"/></svg></button>
        <button aria-label="Mask grids"><svg><use href="#q7"/></svg></button>
        <button aria-label="Mask solids"><svg><use href="#q8"/></svg></button>
        <button aria-label="Mask wireframe"><svg><use href="#q9"/></svg></button>
        <button aria-label="Clear entity mask"><svg><use href="#none"/></svg></button>
        <hr>
        <button aria-label="Mask groups"><svg><use href="#q10"/></svg></button>
        <button aria-label="Mask results"><svg><use href="#q11"/></svg></button>
        <button aria-label="Mask named groups"><svg><use href="#q12"/></svg></button>
        <hr>
        <button aria-label="Mask color"><svg><use href="#q13"/></svg></button>
        <button aria-label="Mask level"><svg><use href="#q14"/></svg></button>
        <button aria-label="Clear attribute mask"><svg><use href="#none"/></svg></button>
        <hr>
      </div>
    </main>

    <footer class="status">
      <span class="status-help">For help, press Alt+H.</span>
      <button class="push status-view" aria-label="Construction mode"></button>
      <button class="push status-planes" aria-label="Planes menu"></button>
      <span class="combo combo-depth"><input aria-label="Z depth"></span>
      <button class="status-color" aria-label="System color"></button>
      <span class="status-space"></span>
      <button class="push">Attributes</button>
      <span class="combo combo-point"><svg viewBox="0 0 10 10"><path d="M5 0v10M0 5h10M2 2l6 6M8 2L2 8" stroke="#111"/></svg><select aria-label="Point style"><option></option></select></span>
      <span class="combo combo-line thick"><select aria-label="Line style"><option></option></select></span>
      <span class="combo combo-line"><select aria-label="Line width"><option></option></select></span>
      <button class="push">WCS</button>
      <button class="push">Groups</button>
      <button class="push slim">!</button>
      <button class="push slim">?</button>
    </footer>

    <div class="taskbar">
      <button class="orb" aria-label="Start">
        <svg viewBox="0 0 36 36"><circle cx="18" cy="18" r="16.500" fill="url(#g-orb)" stroke="#3c5878"/><path d="M3 14c3-15 27-15 30 0-10 4-20 4-30 0z" fill="#fff" opacity=".3"/><path d="M10 11c3-2 5-1 7 0l-1 6c-3-1-5-2-7 0z" fill="#f0592a"/><path d="M19 11c3 1 5 1 7 0l-1 7c-2 1-5 1-7-1z" fill="#8cc63e"/><path d="M9 19c3-2 5-1 7 0l-1 6c-3-1-5-1-7 0z" fill="#3ea8f0"/><path d="M18 20c2 1 5 1 7 0l-1 6c-2 1-5 1-7-1z" fill="#fccb2c"/></svg>
      </button>
      <div class="apps">
        <button aria-label="Windows Explorer"><svg viewBox="0 0 32 30"><path d="M1 3h9l2 3h17v20H1z" fill="#f0d888" stroke="#c8a84c"/><path d="M3 1h8v5H3z" fill="#fff6c8"/><path d="M5 2h4v2H5z" fill="#30a84c"/><path d="M12 3h4v2h-4z" fill="#c84040"/><path d="M19 4h4v2h-4z" fill="#3a80d0"/><path d="M1 8h28v18H1z" fill="#faeaa8"/><path d="M5 28v-9c0-2 1-3 3-3h15c2 0 3 1 3 3v9h-5v-6H10v6z" fill="#9ccdee" stroke="#5a9ac8"/></svg></button>
        <button aria-label="Media Player"><svg viewBox="0 0 32 30"><path d="M9 3h18v22H9z" fill="#a8cce8" stroke="#6c9cc4"/><path d="M4 3h18v22H4z" fill="#d0e6f6" stroke="#7ca8cc"/><circle cx="14" cy="14" r="8.500" fill="#e8691c" stroke="#f8c8a0"/><path d="M11 9l8 5-8 5z" fill="#fff"/></svg></button>
        <button aria-label="Internet Explorer"><svg viewBox="0 0 32 30"><path d="M27 17H11c1 6 8 6 10 3h5c-2 6-8 8-13 7-10-3-10-20 3-21 8 0 12 5 11 11zM11 13h11c-1-5-10-5-11 0z" fill="#2aa0e4" stroke="#1a78b8" stroke-width=".8"/><path d="M5 27C-2 22 18-2 28 3c2 1 1 4 0 6 0-6-8-3-14 4S4 24 8 27z" fill="#f2cc28"/></svg></button>
        <button aria-label="Chrome"><svg viewBox="0 0 32 30"><circle cx="16" cy="15" r="13.500" fill="#fcc934"/><path d="M16 15L4.300 8.300A13.500 13.500 0 0 1 28 9H16z" fill="#e33b2e"/><path d="M16 15L4.300 8.300A13.500 13.500 0 0 0 15 28.500L21.500 18z" fill="#2c9f4b"/><circle cx="16" cy="15" r="6.300" fill="#fff"/><circle cx="16" cy="15" r="5" fill="#4284f0"/></svg></button>
        <button class="active" aria-label="Mastercam"><svg viewBox="0 0 32 30"><path d="M3 3h8l4 7 6-8h9l-1 4h-5l-6 9 6 12h-8l-3-7-5 8H3l7-12z" fill="#3a3a3c"/><path d="M5 4h4l12 22h-4zM27 3L8 27" stroke="#e4e4e8" stroke-width="1.500" fill="#aaa"/></svg></button>
        <button class="open" aria-label="Camtasia"><svg viewBox="0 0 32 30"><path d="M2 1h26v23H2z" fill="#6fa82c"/><path d="M28 1L12 24h16z" fill="#8cc048"/><path d="M2 24h26l2 5H4z" fill="#2a5410"/><path d="M9 4h5v10h10v5H9z" fill="#fff"/></svg></button>
        <button class="open" aria-label="Camtasia Recorder"><svg viewBox="0 0 32 30"><path d="M2 1h26v23H2z" fill="#fff"/><path d="M2 24h26l2 5H4z" fill="#2a5410"/><path d="M9 4h5v10h10v5H9z" fill="#3c7a14"/></svg></button>
      </div>
      <div class="tray">
        <span class="lang">EN</span>
        <svg viewBox="0 0 16 16"><path d="M5 3h9v12H3z" fill="#e6eefa" stroke="#8ca0c0"/><path d="M2 4l4 6 4-10" fill="none" stroke="#d82020" stroke-width="2"/></svg>
        <svg viewBox="0 0 16 16"><circle cx="8" cy="8" r="7.200" fill="#1c2c9c" stroke="#c8d0f0"/><path d="M5.500 6c0-3.500 5-3.500 5 0 0 2-2.500 2-2.500 4" fill="none" stroke="#fff" stroke-width="1.700"/><circle cx="8" cy="12.200" r="1.100" fill="#fff"/></svg>
        <svg viewBox="0 0 16 22"><path d="M5.500 2.500h6v4h-6zM3.500 5.500h6v3h-6z" fill="#8ea0bc" stroke="#fff"/><path d="M5 15h7l-3.500 4z" fill="#fff"/></svg>
        <svg viewBox="0 0 16 16"><path d="M4 11h8L8 7z" fill="#fff"/></svg>
        <svg viewBox="0 0 16 16"><path d="M1 1v14" stroke="#eee" stroke-width="1.500"/><path d="M2 2c4-2 6 2 11 0v8c-4 2-7-2-11 0z" fill="#eef2f8" stroke="#888" stroke-width=".6"/><circle cx="11" cy="11.500" r="4.400" fill="#d82828"/><path d="M9 9.500l4 4M13 9.500l-4 4" stroke="#fff" stroke-width="1.500"/></svg>
        <svg viewBox="0 0 16 16"><path d="M3 3h10v11H3z" fill="#555" stroke="#ddd"/><path d="M8 1h7v8H8z" fill="#eef"/><path d="M1 6l9 9M10 6l-9 9" stroke="#c81818" stroke-width="3"/></svg>
        <svg viewBox="0 0 16 16"><path d="M0 12h3v3H0zM4 9h3v6H4zM8 5h3v10H8zM12 1h3v14h-3z" fill="#667084" stroke="#b8c4d8" stroke-width=".6"/><circle cx="10.500" cy="11" r="4" fill="#f0a020"/></svg>
        <time class="clock">04:07 p.m.<br>30/09/2017</time>
        <button class="show-desktop" aria-label="Show desktop"></button>
      </div>
    </div>
  </div>

  <section class="dialog" aria-label="Line Properties">
    <div class="dialog-title">
      <span>Line Proper</span>
      <button class="dialog-close" aria-label="Close dialog"><svg viewBox="0 0 10 8"><path d="M1 0h2l2 2.500L7 0h2v1.500L6.500 4 9 6.500V8H7L5 5.500 3 8H1V6.500L3.500 4 1 1.500z" fill="#fff"/></svg></button>
    </div>
    <form class="dialog-body">
      <div class="row nav-row">
        <button type="button" class="push big" aria-label="Previous entity"><svg viewBox="0 0 20 22"><path d="M12 0v22L0 11zM15 0h4v22h-4z" fill="#1668c8"/></svg></button>
        <button type="button" class="push big" aria-label="Next entity"><svg viewBox="0 0 20 22"><path d="M8 0v22l12-11zM1 0h4v22H1z" fill="#1668c8"/></svg></button>
      </div>
      <hr>
      <svg class="segment" viewBox="0 0 64 14"><path d="M8 7h48" stroke="#6a64a8" stroke-width="3"/><path d="M4.500 3h3v3h3v3h-3v3h-3V9h-3V6h3z" fill="#30b030" stroke="#165c16"/><path d="M57.500 3h3v3h3v3h-3v3h-3V9h-3V6h3z" fill="#e02828" stroke="#701010"/></svg>
      <div class="coords">
        <input class="start" aria-label="Start X" value="0.433" autofocus><span>X</span><input aria-label="End X" value="0.866">
        <input aria-label="Start Y" value="1.75"><span>Y</span><input aria-label="End Y" value="2.5">
        <input aria-label="Start Z" value="0.0"><span>Z</span><input aria-label="End Z" value="0.0">
      </div>
      <div class="row point-row">
        <button type="button" class="push square" aria-label="Edit point 1"><svg viewBox="0 0 24 24"><path d="M5 3h3v4h4v3H8v4H5v-4H1V7h4z" fill="#e8381c"/><path d="M13 6l4-3h2v16h3v2h-8v-2h2V7l-3 1z" fill="#b8bcd4" stroke="#3c4058"/></svg></button>
        <button type="button" class="push square" aria-label="Edit point 2"><svg viewBox="0 0 24 24"><path d="M4 7h3v4h4v3H7v4H4v-4H0v-3h4z" fill="#e8381c"/><path d="M10 8c1-6 12-6 12 0 0 4-5 6-7 9h4l1-2h3l-1 6H10v-3c3-3 7-6 7-10 0-2-3-2-3 1z" fill="#c8ccd8" stroke="#3c4048"/></svg></button>
      </div>
      <div class="measure">
        <span></span>
        <svg viewBox="0 0 24 22"><path d="M2 18L16 2" stroke="#777" stroke-width="1.500"/><path d="M0 19.500h24" stroke="#2468c8" stroke-width="2.500"/><path d="M5 5c6 3 8 9 9 16" fill="none" stroke="#d82828" stroke-width="1.500" stroke-dasharray="5 1"/></svg>
        <input aria-label="Angle" value="60.0">
        <label for="len3d">3D</label>
        <svg viewBox="0 0 24 22"><path d="M5 3h8V0l7 5-7 5V7H5z" fill="#aab0bc" stroke="#3c4048"/><path d="M1 12h3v5h3v-3h2v3h2v-5h2v5h2v-3h2v3h3v-5h3v10H1z" fill="#e83c1c"/></svg>
        <input id="len3d" value="0.866">
        <label for="len2d">2D</label>
        <svg viewBox="0 0 24 22"><path d="M5 3h8V0l7 5-7 5V7H5z" fill="#aab0bc" stroke="#3c4048"/><path d="M1 12h3v5h3v-3h2v3h2v-5h2v5h2v-3h2v3h3v-5h3v10H1z" fill="#e83c1c"/></svg>
        <input id="len2d" class="readonly" value="0.866" readonly>
      </div>
      <div class="deltas">
        <label for="dx"><b>Δ</b>X</label>
        <label for="dy"><b>Δ</b>Y</label>
        <label for="dz"><b>Δ</b>Z</label>
        <input id="dx" class="readonly" value="0.433" readonly>
        <input id="dy" class="readonly" value="0.75" readonly>
        <input id="dz" class="readonly" value="0.0" readonly>
      </div>
      <hr>
      <div class="row level-row">
        <button type="button" class="push square" aria-label="Level"><svg viewBox="0 0 20 20"><path d="M1 1h18v18H1z" fill="#e0e0e6" stroke="#333" stroke-width="2"/><path d="M2 2h16v7H2z" fill="#f4d838"/><path d="M10 1v18M1 10h18" stroke="#333" stroke-width="2"/><path d="M3 5l2 4 4-7" fill="none" stroke="#d82828" stroke-width="2"/></svg></button>
        <input aria-label="Level number" value="2">
        <button type="button" class="push square" aria-label="Color"><svg viewBox="0 0 24 18"><path d="M0 1h24v16H0z" fill="#333"/><path d="M1 2h6v6H1z" fill="#d83030"/><path d="M9 2h6v6H9z" fill="#e8b020"/><path d="M17 2h6v6h-6z" fill="#28a838"/><path d="M1 10h6v6H1z" fill="#2878c8"/><path d="M9 10h6v6H9z" fill="#e86020"/><path d="M17 10h6v6h-6z" fill="#7060b8"/></svg></button>
        <input aria-label="Color number" class="plain" value="10">
      </div>
      <div class="styles">
        <label for="line-style">Style</label>
        <span class="combo combo-line thick"><select id="line-style"><option></option></select></span>
        <label for="line-width">Width</label>
        <span class="combo combo-line"><select id="line-width"><option></option></select></span>
      </div>
      <div class="row star-row">
        <button type="button" class="push big" aria-label="Point style"><svg viewBox="0 0 22 22"><circle cx="11" cy="11" r="10.500" fill="url(#g-ball)"/><path d="M11 4v14M4 11h14M6 6l10 10M16 6L6 16" stroke="#fff" stroke-width="3"/></svg></button>
      </div>
      <hr>
      <div class="row ok-row">
        <button type="button" class="push big" aria-label="OK"><svg viewBox="0 0 20 20"><path d="M2 11l3-2 3 4L16 1l3 1-10 17H7z" fill="#38c030" stroke="#1c7c1c"/></svg></button>
        <button type="button" class="push big" aria-label="Cancel"><svg viewBox="0 0 20 20"><path d="M2 5l3-3 5 4 5-4 3 3-4 5 4 5-3 3-5-4-5 4-3-3 4-5z" fill="#e03020" stroke="#a01810"/></svg></button>
        <button type="button" class="push big" aria-label="Dialog help"><svg viewBox="0 0 16 16"><use href="#help"/></svg></button>
      </div>
    </form>
  </section>

  <div class="tooltip" role="tooltip">Select entities to analyze</div>

  <svg class="cursor" viewBox="0 0 12 18"><path d="M1 1v13l3-3 3 6 2-1-3-6h5z" fill="#fff" stroke="#222"/></svg>

  <div class="banner">
    <svg viewBox="0 0 710 64" preserveAspectRatio="none"><path d="M1 31L251 1v14h204V1l253 31-253 29V47H251v14z" fill="url(#g-banner)" stroke="#ccd4e2" stroke-width="2"/></svg>
    <span>h.godoycncprogrammer</span>
  </div>

  <script>
    // start with the first coordinate ready to overtype
    const startX = document.querySelector(".coords .start");
    startX.focus();
    startX.select();
  </script>
</body>
</html>
```
FILE: styles.css
```
* {
  box-sizing: border-box;
}

body {
  margin: 0;
  height: 100vh;
  overflow: hidden;
  background: #000;
  color: #111;
  font-family: "Noto Sans", "Open Sans", sans-serif;
  font-size: 11px;
}

button, input, select {
  font-family: "Liberation Sans", Arial, sans-serif;
  font-size: 11px;
  color: #111;
  margin: 0;
  padding: 0;
}

button {
  border: 0;
  background: none;
  display: flex;
  align-items: center;
  justify-content: center;
}

a {
  color: inherit;
  text-decoration: none;
}

.icon-defs {
  position: absolute;
  width: 0;
  height: 0;
}

.app {
  height: 100vh;
  margin: 0 1px;
  display: flex;
  flex-direction: column;
  background: #eeeeee;
}

/* Title bar and menu */
.titlebar {
  height: 21px;
  flex: none;
  display: flex;
  align-items: center;
  gap: 5px;
  padding-left: 1px;
  background: linear-gradient(#d2d9e6, #ccd3e0);
  border-bottom: 1px solid #8d93a1;
}

.titlebar-mark {
  width: 14px;
  height: 15px;
}

.titlebar-text {
  flex: 1;
}

.window-buttons {
  display: flex;
  align-self: flex-start;
  height: 16px;
  border: 1px solid #8e97a8;
  border-top: 0;
  border-radius: 0 0 4px 4px;
  margin-right: 1px;
}

.window-buttons button {
  width: 26px;
  border-right: 1px solid #8e97a8;
}

.window-buttons .wide {
  width: 43px;
  border-right: 0;
}

.window-buttons svg {
  width: 11px;
  height: 11px;
}

.menubar {
  height: 19px;
  flex: none;
  display: flex;
  align-items: center;
  gap: 12px;
  padding-left: 6px;
  color: #6f7386;
  background: linear-gradient(#f8faff, #dcdff0 50%, #dcdff0);
  border-bottom: 1px solid #b4b7c4;
}

/* Toolbars */
.toolbar {
  height: 28px;
  flex: none;
  display: flex;
  background: #d5d6eb;
  padding-left: 1px;
}

.group {
  display: flex;
  align-items: center;
  background: #f0f0f1;
  border-right: 1px solid #9c9ca4;
  border-bottom: 1px solid #b4b4bc;
  border-left: 1px solid #fff;
  padding-right: 1px;
}

.toolbar-main .group {
  padding-right: 2px;
}

.group::before {
  content: "";
  width: 9px;
  height: 18px;
  background: radial-gradient(circle at 4px 2px, #b4b4bc 1px, transparent 1px) 0 0 / 9px 4px;
}

.tool {
  width: 22px;
  height: 24px;
}

.tool svg {
  width: 16px;
  height: 16px;
}

.drop {
  width: 14px;
  height: 20px;
}

.drop::before {
  content: "";
  border: 4px solid transparent;
  border-top-color: #222;
  border-bottom: 0;
}

.sep {
  width: 1px;
  height: 17px;
  margin: 0 3px 0 2px;
  background: #9a9aa2;
}

.toolbar-coords {
  border-bottom: 2px solid #bcbcd0;
  padding-left: 0;
  height: 30px;
}

.strip {
  display: flex;
  align-items: center;
  background: #fbfccc;
  border-right: 1px solid #a8a8a8;
  padding-top: 2px;
}

.strip-xyz {
  width: 422px;
  padding-left: 5px;
}

.strip-select {
  margin-left: 145px;
  padding-left: 4px;
  padding-right: 6px;
}

.axis-button {
  width: 20px;
  height: 20px;
  border: 1px solid #a9aab8;
  border-radius: 2px;
  background: #f2f2f2;
  display: flex;
  align-items: center;
  justify-content: center;
  font-family: "Liberation Sans", Arial, sans-serif;
  font-size: 12px;
  margin-right: 4px;
}

.combo {
  position: relative;
  display: flex;
  width: 68px;
  height: 20px;
  background: #fff;
  border: 1px solid #cfcfd8;
  margin-right: 11px;
}

.combo-last {
  margin-right: 6px;
}

.combo::after {
  content: "";
  position: absolute;
  right: 4px;
  top: 8px;
  border: 4px solid transparent;
  border-top-color: #111;
  border-bottom: 0;
  pointer-events: none;
}

.strip-xyz .combo::after {
  right: 3px;
  border-top-color: #a4a4ac;
}

.combo input, .combo select {
  appearance: none;
  flex: 1;
  width: 100%;
  border: 0;
  outline: 0;
  background: none;
  padding-left: 2px;
}

.tile {
  width: 20px;
  height: 20px;
  margin-right: 3px;
  background: #f0f0ea;
  border-right: 1px solid #c4c4c4;
  border-bottom: 1px solid #c4c4c4;
}

.tile svg {
  width: 16px;
  height: 16px;
}

.strip-select .tile {
  margin: 0 2px 0 1px;
}

.strip-select .gap {
  margin-left: 6px;
}

.drop-off {
  width: 10px;
  margin-right: 4px;
}

.drop-off::before {
  border-width: 3px;
  border-top-color: #a4a4ac;
  border-bottom: 0;
}

.drop-dash {
  width: 13px;
}

.drop-dash::before {
  content: "";
  width: 5px;
  height: 1px;
  background: #999;
}

.bar {
  width: 2px;
  height: 20px;
  border-left: 1px solid #aaa;
  margin-right: 7px;
}

.push {
  border: 1px solid #8d8d95;
  border-radius: 3px;
  background: linear-gradient(#f4f4f4, #ebebeb 50%, #dadada 50%, #d2d2d2);
}

.push-text {
  width: 43px;
  height: 20px;
  margin-right: 8px;
}

.push-icon {
  width: 20px;
  height: 20px;
}

.push-icon svg {
  width: 17px;
  height: 17px;
}

.combo-in {
  border: 1px solid #8d8d95;
  border-radius: 3px;
  background: linear-gradient(#f4f4f4, #dadada);
  margin: 0 8px 0 7px;
}

.ribbon {
  height: 28px;
  flex: none;
  padding: 6px 0 0 175px;
  line-height: 16px;
  font-family: "Liberation Sans", Arial, sans-serif;
}

/* Workspace */
.workspace {
  flex: 1;
  min-height: 0;
  display: flex;
  border-top: 1px solid #666;
  border-bottom: 1px solid #fff;
}

.operations {
  width: 239px;
  flex: none;
  display: flex;
  flex-direction: column;
  padding: 0 0 4px 1px;
  font-family: "Liberation Sans", Arial, sans-serif;
}

.operations h2 {
  margin: 0;
  padding-left: 1px;
  height: 17px;
  line-height: 17px;
  font-size: 10px;
  font-weight: normal;
  background: #a6a6a6;
}

.tab {
  height: 22px;
  line-height: 20px;
  padding-left: 3px;
  font-size: 10px;
  background: #fff;
  border-bottom: 1px solid #bbb;
}

.operations-tools {
  height: 29px;
  padding: 5px 0 0 6px;
  border-bottom: 1px solid #bbb;
}

.operations-tools svg {
  width: 48px;
  height: 18px;
}

.tree {
  flex: 1;
  margin: 5px 0 0 1px;
  background: #fff;
  border: 1px solid #999;
}

.tree svg {
  width: 60px;
  height: 50px;
}

.viewport {
  flex: 1;
  min-width: 0;
  background: #000090;
}

.viewport > svg {
  display: block;
  width: 100%;
  height: 100%;
}

.outline {
  fill: none;
  stroke: #20c060;
}

.hex {
  stroke: #c0cc80;
}

.violet {
  stroke: #9400cc;
}

.crimson {
  stroke: #980048;
}

.viewport text {
  font-family: "Noto Sans", sans-serif;
  font-size: 11px;
  stroke: none;
}

.viewport .view-text, .viewport .scale-unit {
  fill: #d8dcf4;
  font-weight: 500;
}

.viewport .axis-y {
  fill: #20d030;
  font-weight: bold;
}

.viewport .axis-x {
  fill: #c01030;
  font-weight: bold;
}

.viewport .scale-value {
  fill: #20f040;
  font-weight: bold;
}

.quickmask {
  width: 27px;
  flex: none;
  display: flex;
  flex-direction: column;
  align-items: center;
  background: #f0f0f1;
  border-left: 2px solid #fff;
  padding-top: 4px;
}

.quickmask::after {
  content: "";
  flex: 1;
  align-self: stretch;
  background: #d5d6eb;
}

.grip-top {
  width: 17px;
  height: 7px;
  border-top: 2px dotted #b0b0b8;
}

.quickmask button {
  width: 22px;
  height: 21px;
  flex: none;
}

.quickmask button:nth-of-type(3n) {
  height: 20px;
}

.quickmask svg {
  width: 16px;
  height: 16px;
}

.quickmask hr {
  width: 17px;
  margin: 3px 0;
  border: 0;
  border-top: 1px solid #aaa;
}

/* Status bar */
.status {
  height: 24px;
  flex: none;
  display: flex;
  align-items: center;
  gap: 4px;
  padding: 2px 0 0 2px;
  border-top: 1px solid #999;
  background: #f0eeec;
  overflow: hidden;
}

.status-help {
  width: 576px;
}

.status .push {
  height: 18px;
  padding: 0 4px;
  border-color: #bbb;
  background: #f4f4f4;
  font-family: "Noto Sans", sans-serif;
}

.status .status-view {
  width: 28px;
}

.status .status-planes {
  width: 34px;
}

.status .combo {
  margin: 0;
  border-color: #ddd;
}

.status .combo-depth {
  width: 78px;
  margin-left: 16px;
  background: linear-gradient(90deg, #3a8ee0 18px, #ffff9c 18px, #ffff9c 58px, #fff 58px);
}

.status-color {
  width: 28px;
  height: 18px;
  background: #10e818;
}

.status-space {
  flex: 1;
}

.combo-line select {
  background: linear-gradient(#111, #111) no-repeat 2px center / 63px 1px;
}

.combo-line.thick select {
  background-size: 63px 3px;
}

.status .combo-line {
  width: 61px;
}

.status .combo-line select {
  background-size: 42px 1px;
}

.status .combo-line.thick select {
  background-size: 38px 3px;
}

.status .combo-point {
  width: 34px;
  align-items: center;
  padding-left: 2px;
}

.combo-point svg {
  width: 9px;
  height: 9px;
  flex: none;
}

.status .slim {
  padding: 0 2px;
}

/* Taskbar */
.taskbar {
  height: 38px;
  flex: none;
  display: flex;
  align-items: center;
  border-top: 1px solid #8a98ac;
  background: linear-gradient(90deg, #8592ac, #a4b6d0 7%, #b2cfe8 12%, #b2cfe8 72%, #8e9db8 80%, #8e9db8);
}

.orb {
  width: 50px;
  height: 36px;
}

.orb svg {
  width: 35px;
  height: 35px;
}

.apps {
  display: flex;
  flex: 1;
  gap: 2px;
  padding-left: 5px;
}

.apps button {
  width: 56px;
  height: 36px;
  border-radius: 3px;
}

.apps svg {
  width: 30px;
  height: 28px;
}

.apps .active {
  border: 1px solid #7888a0;
  background: linear-gradient(135deg, #fff, #ccd8e8);
}

.apps .open {
  border: 1px solid #7888a0;
  background: #c0d6ec;
}

.tray {
  display: flex;
  align-items: center;
  gap: 6px;
  color: #fff;
}

.tray svg {
  width: 15px;
  height: 20px;
}

.lang {
  color: #e0e8f4;
}

.clock {
  width: 66px;
  text-align: center;
  line-height: 16px;
  margin-left: 4px;
}

.show-desktop {
  width: 11px;
  height: 36px;
  border-left: 1px solid #5c6a80;
  background: linear-gradient(135deg, #73839c, #a6b8cc);
}

/* Floating property window */
.dialog {
  position: absolute;
  left: 38px;
  top: 150px;
  width: 215px;
  padding: 0 6px 6px 5px;
  border: 1px solid #333a48;
  border-radius: 6px;
  background: linear-gradient(#e2e5ea, #dfe3e8 28%, #b8cfe8 30%, #b8cfe8);
  box-shadow: inset 0 0 0 1px #f4f8ff, 2px 2px 10px 3px rgba(0, 0, 0, .65);
}

.dialog-title {
  height: 26px;
  display: flex;
  justify-content: space-between;
}

.dialog-title span {
  line-height: 24px;
}

.dialog-close {
  width: 43px;
  height: 17px;
  border: 1px solid #5a1c1c;
  border-top: 0;
  border-radius: 0 0 4px 4px;
  background: linear-gradient(#e8a8a0, #c84c40 50%, #b02818 50%, #c85848);
}

.dialog-close svg {
  width: 10px;
  height: 8px;
}

.dialog-body {
  border: 1px solid #6c7480;
  background: #eeeeee;
  padding: 10px 11px 12px 17px;
}

.dialog-body hr {
  width: 136px;
  margin: 4px 0 0 15px;
  border: 0;
  border-top: 1px solid #888;
}

.row {
  display: flex;
}

.push.big {
  width: 50px;
  height: 26px;
}

.push.square {
  width: 27px;
  height: 26px;
}

.big svg {
  width: 21px;
  height: 22px;
}

.square svg {
  width: 22px;
  height: 22px;
}

.nav-row {
  gap: 4px;
  padding-left: 31px;
}

.segment {
  display: block;
  width: 64px;
  height: 14px;
  margin: 9px 0 7px 51px;
}

.dialog-body input {
  height: 21px;
  width: 100%;
  min-width: 0;
  border: 1px solid #fff;
  border-top-color: #b4b4b4;
  border-left-color: #ccc;
  padding: 0 0 3px 2px;
  background: #ffff80;
  outline: 0;
}

.dialog-body .start {
  border-color: #7fb0e0;
}

.dialog-body input::selection {
  background: #3494f4;
  color: #fff;
}

.dialog-body .readonly {
  background: #cddffa;
}

.dialog-body .plain {
  background: #fff;
}

.coords {
  display: grid;
  grid-template-columns: 56px 34px 56px;
  row-gap: 2px;
  margin-left: 10px;
  align-items: center;
  text-align: center;
}

.coords span, .deltas label, .measure label, .styles label {
  font-family: "Liberation Sans", Arial, sans-serif;
  font-size: 12px;
}

.point-row {
  padding: 3px 0 4px 25px;
  gap: 63px;
}

.measure {
  display: grid;
  grid-template-columns: 34px 24px 56px;
  gap: 10px 5px;
  margin-left: 10px;
  text-align: right;
}

.measure svg {
  width: 24px;
  height: 21px;
  display: block;
}

.measure label {
  line-height: 19px;
}

.deltas {
  display: grid;
  grid-template-columns: repeat(3, 46px);
  column-gap: 4px;
  margin: 18px 0 6px 10px;
  text-align: center;
}

.deltas label {
  line-height: 15px;
  height: 14px;
}

.deltas b {
  font-family: "Liberation Serif", serif;
  font-size: 15px;
}

.level-row {
  gap: 4px;
  margin: 6px 0 7px;
}

.level-row .square {
  height: 24px;
}

.level-row .square svg {
  width: 20px;
  height: 20px;
}

.level-row input {
  width: 50px;
}

.level-row input + .push {
  margin-left: 2px;
}

.styles {
  display: grid;
  grid-template-columns: 40px 83px;
  gap: 1px 8px;
  margin-left: 10px;
  text-align: right;
}

.styles label {
  line-height: 18px;
  font-size: 11px;
}

.styles .combo {
  width: 83px;
  height: 21px;
  margin: 0;
}

.star-row {
  padding: 3px 0 1px 58px;
}

.ok-row {
  gap: 6px;
  padding: 5px 0 0 11px;
}

.tooltip {
  position: absolute;
  left: 102px;
  top: 153px;
  padding: 0 4px;
  line-height: 14px;
  font-family: "Liberation Sans", Arial, sans-serif;
  font-size: 10px;
  white-space: nowrap;
  background: #ffffe1;
  border: 1px solid #555;
}

.cursor {
  position: absolute;
  left: 133px;
  top: 552px;
  width: 12px;
  height: 18px;
}

/* Video caption banner */
.banner {
  position: absolute;
  left: 333px;
  top: 655px;
  width: 710px;
  height: 64px;
  display: flex;
  align-items: center;
  justify-content: center;
  color: #fff;
  font-family: "Liberation Sans", Arial, sans-serif;
  font-size: 21px;
}

.banner svg {
  position: absolute;
  width: 100%;
  height: 100%;
  filter: drop-shadow(2px 3px 2px rgba(0, 0, 0, .55));
}

.banner span {
  position: relative;
}
```
